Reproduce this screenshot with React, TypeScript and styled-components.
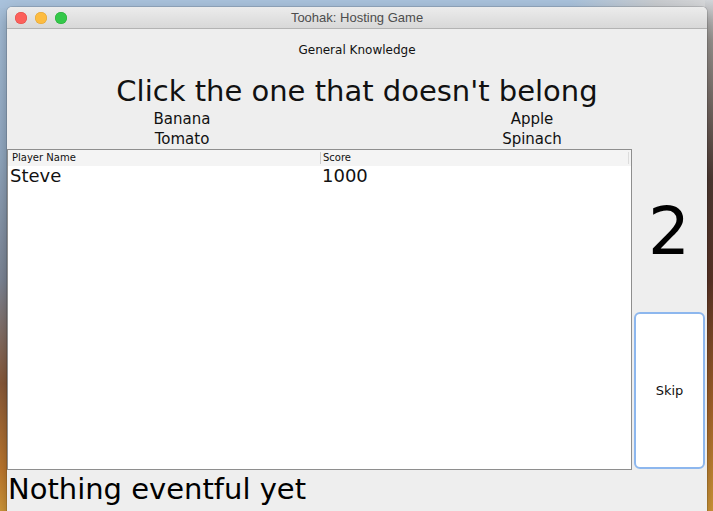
import React from 'react';
import styled, { createGlobalStyle } from 'styled-components';

const GlobalStyle = createGlobalStyle`
  html, body {
    margin: 0;
    height: 100%;
    overflow: hidden;
  }
  body {
    font-family: "DejaVu Sans", "Liberation Sans", sans-serif;
  }
`;

const Desktop = styled.div`
  box-sizing: border-box;
  height: 100vh;
  padding: 7px 0 0 7px;
  background-color: #8a8f9c;
  background-image:
    linear-gradient(180deg, #d2d5d9 0%, #9a9591 8%, #4e3a33 35%, #5b3426 55%, #a8652a 80%, #d49a38 100%),
    linear-gradient(90deg, #a9c2dc 0%, #a9c2dc 80%, #c9ccd0 92%, #d8d9db 100%),
    linear-gradient(180deg, #a8c1db 0%, #94abc4 30%, #7e8797 55%, #8a5a3a 75%, #c17a2e 92%, #d39a3a 100%);
  background-size: 8px 100%, 100% 8px, 100% 100%;
  background-position: right top, left top, left top;
  background-repeat: no-repeat;
`;

const Window = styled.div`
  width: 700px;
  height: 520px;
  background: #eeeeee;
  border-radius: 5px 5px 0 0;
  overflow: hidden;
  box-shadow: 0 0 0 1px rgba(0, 0, 0, 0.12), 0 6px 16px rgba(0, 0, 0, 0.3);
  display: flex;
  flex-direction: column;
`;

const TitleBar = styled.div`
  height: 21px;
  border-bottom: 1px solid #b3b3b3;
  background: linear-gradient(180deg, #ececec 0%, #d8d8d8 100%);
  display: grid;
  grid-template-columns: 1fr auto 1fr;
  align-items: center;
`;

const Lights = styled.div`
  display: flex;
  gap: 8px;
  padding-left: 8px;
`;

const Light = styled.span<{ $color: string; $edge: string }>`
  width: 12px;
  height: 12px;
  border-radius: 50%;
  background: ${(p) => p.$color};
  box-shadow: inset 0 0 0 0.5px ${(p) => p.$edge};
`;

const Title = styled.div`
  font-family: "Liberation Sans", Arial, sans-serif;
  font-size: 13px;
  color: #4d4d4d;
`;

const Body = styled.div`
  display: grid;
  grid-template-columns: 625px 75px;
  grid-template-rows: auto 321px auto;
`;

const Header = styled.div`
  grid-column: 1 / 3;
  display: flex;
  flex-direction: column;
  align-items: center;
`;

const Category = styled.div`
  padding-top: 14px;
  font-size: 12px;
  line-height: 15px;
  color: #111;
`;

const Prompt = styled.div`
  margin-top: 15px;
  font-size: 29px;
  line-height: 36px;
  color: #111;
`;

const Options = styled.div`
  width: 100%;
  display: grid;
  grid-template-columns: 1fr 1fr;
  grid-auto-rows: 20px;
`;

const Option = styled.div`
  text-align: center;
  font-size: 15px;
  line-height: 21px;
  color: #111;
`;

const Table = styled.div`
  border: 1px solid #8e8e8e;
  background: #ffffff;
  display: flex;
  flex-direction: column;
`;

const Row = styled.div<{ $head?: boolean }>`
  display: grid;
  grid-template-columns: 312px 1fr;
  height: ${(p) => (p.$head ? '16px' : '20px')};
  background: ${(p) => (p.$head ? '#f4f4f4' : '#ffffff')};
  padding-right: ${(p) => (p.$head ? '2px' : '0')};
`;

const HeadCell = styled.div<{ $divider?: boolean }>`
  font-size: 10px;
  line-height: 12px;
  margin: 2px 0;
  padding-left: ${(p) => (p.$divider ? '2px' : '4px')};
  color: #111;
  border-left: ${(p) => (p.$divider ? '1px solid #cdcdcd' : 'none')};
  border-right: ${(p) => (p.$divider ? '1px solid #dcdcdc' : 'none')};
`;

const Cell = styled.div`
  font-size: 18px;
  line-height: 20px;
  padding-left: 2px;
  color: #111;
`;

const East = styled.div`
  display: grid;
  grid-template-rows: 160px 1fr;
`;

const Countdown = styled.div`
  display: flex;
  align-items: center;
  justify-content: center;
  font-size: 66px;
  color: #000;
  padding: 4px 1px 0 0;
`;

const SkipButton = styled.button`
  margin: 3px 2px 1px 2px;
  background: #ffffff;
  border: 2px solid #8db7ee;
  border-radius: 6px;
  font-family: "DejaVu Sans", sans-serif;
  font-size: 13px;
  color: #111;
  padding: 0;
`;

const Status = styled.div`
  grid-column: 1 / 3;
  padding: 2px 2px 0 1px;
  font-size: 29px;
  line-height: 34px;
  color: #000;
`;

export default function App() {
  return (
    <>
      <GlobalStyle />
      <Desktop>
        <Window>
          <TitleBar>
            <Lights>
              <Light $color="#fc605b" $edge="#de4a43" />
              <Light $color="#fdbc40" $edge="#dea236" />
              <Light $color="#34c84a" $edge="#27aa35" />
            </Lights>
            <Title>Toohak: Hosting Game</Title>
            <span />
          </TitleBar>
          <Body>
            <Header>
              <Category>General Knowledge</Category>
              <Prompt>Click the one that doesn't belong</Prompt>
              <Options>
                <Option>Banana</Option>
                <Option>Apple</Option>
                <Option>Tomato</Option>
                <Option>Spinach</Option>
              </Options>
            </Header>
            <Table>
              <Row $head>
                <HeadCell>Player Name</HeadCell>
                <HeadCell $divider>Score</HeadCell>
              </Row>
              <Row>
                <Cell>Steve</Cell>
                <Cell>1000</Cell>
              </Row>
            </Table>
            <East>
              <Countdown>2</Countdown>
              <SkipButton>Skip</SkipButton>
            </East>
            <Status>Nothing eventful yet</Status>
          </Body>
        </Window>
      </Desktop>
    </>
  );
}
